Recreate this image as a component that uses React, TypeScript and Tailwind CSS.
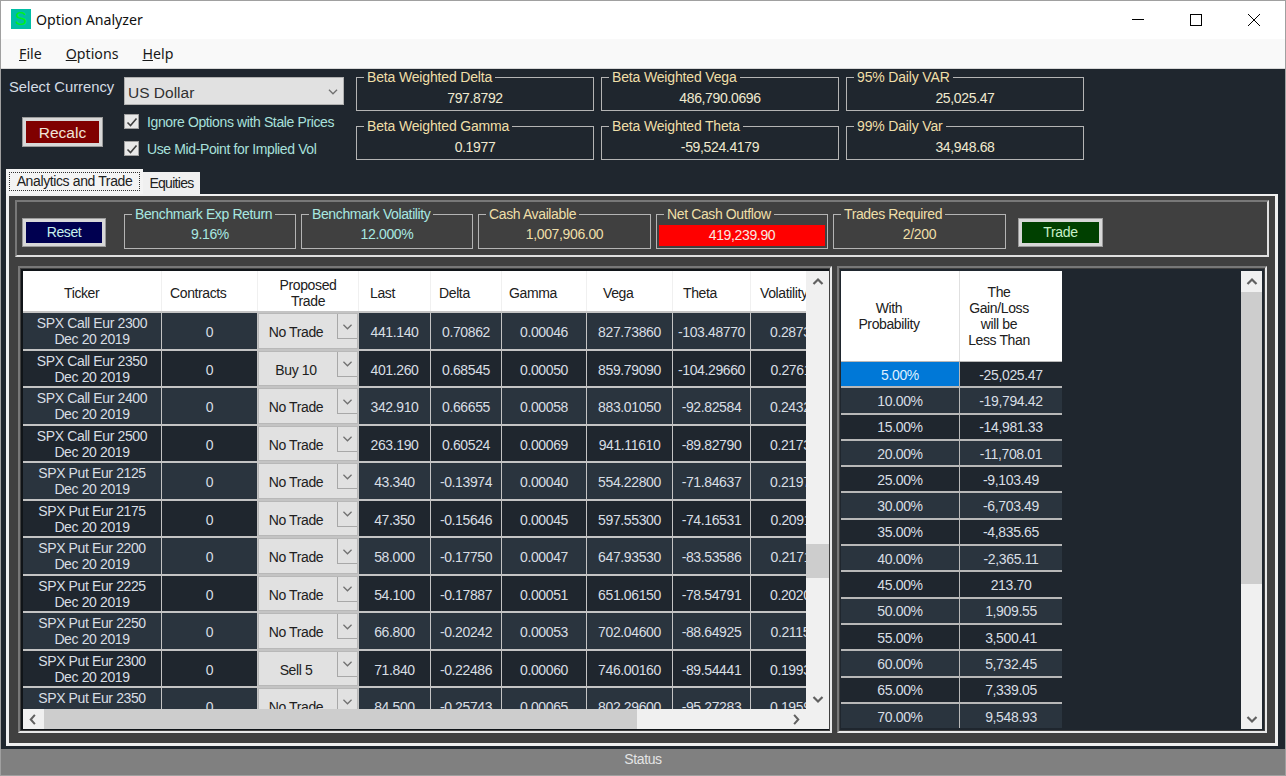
import React from "react";

const FONT = { fontFamily: '"Liberation Sans", Arial, sans-serif' };
const UI = { fontFamily: '"Noto Sans", "Open Sans", sans-serif' };

type Row = { t: string; trade: string; v: string[] };
const rows: Row[] = [
  { t: "SPX Call Eur 2300", trade: "No Trade", v: ["441.140", "0.70862", "0.00046", "827.73860", "-103.48770", "0.28731"] },
  { t: "SPX Call Eur 2350", trade: "Buy 10", v: ["401.260", "0.68545", "0.00050", "859.79090", "-104.29660", "0.27611"] },
  { t: "SPX Call Eur 2400", trade: "No Trade", v: ["342.910", "0.66655", "0.00058", "883.01050", "-92.82584", "0.24321"] },
  { t: "SPX Call Eur 2500", trade: "No Trade", v: ["263.190", "0.60524", "0.00069", "941.11610", "-89.82790", "0.21731"] },
  { t: "SPX Put Eur 2125", trade: "No Trade", v: ["43.340", "-0.13974", "0.00040", "554.22800", "-71.84637", "0.21971"] },
  { t: "SPX Put Eur 2175", trade: "No Trade", v: ["47.350", "-0.15646", "0.00045", "597.55300", "-74.16531", "0.20911"] },
  { t: "SPX Put Eur 2200", trade: "No Trade", v: ["58.000", "-0.17750", "0.00047", "647.93530", "-83.53586", "0.21711"] },
  { t: "SPX Put Eur 2225", trade: "No Trade", v: ["54.100", "-0.17887", "0.00051", "651.06150", "-78.54791", "0.20201"] },
  { t: "SPX Put Eur 2250", trade: "No Trade", v: ["66.800", "-0.20242", "0.00053", "702.04600", "-88.64925", "0.21151"] },
  { t: "SPX Put Eur 2300", trade: "Sell 5", v: ["71.840", "-0.22486", "0.00060", "746.00160", "-89.54441", "0.19931"] },
  { t: "SPX Put Eur 2350", trade: "No Trade", v: ["84.500", "-0.25743", "0.00065", "802.29600", "-95.27283", "0.19591"] },
];

const probs: [string, string][] = [
  ["5.00%", "-25,025.47"], ["10.00%", "-19,794.42"], ["15.00%", "-14,981.33"], ["20.00%", "-11,708.01"],
  ["25.00%", "-9,103.49"], ["30.00%", "-6,703.49"], ["35.00%", "-4,835.65"], ["40.00%", "-2,365.11"],
  ["45.00%", "213.70"], ["50.00%", "1,909.55"], ["55.00%", "3,500.41"], ["60.00%", "5,732.45"],
  ["65.00%", "7,339.05"], ["70.00%", "9,548.93"],
];

const valueWidths = ["w-[71px]", "w-[70px]", "w-[84px]", "w-[85px]", "w-[77px]", "w-[86px]"];

function Chevron({ dir, className = "", thin = false }: { dir: "up" | "down" | "left" | "right"; className?: string; thin?: boolean }) {
  const d = {
    up: "M1.5 7 L6 2.5 L10.5 7",
    down: "M1.5 3 L6 7.5 L10.5 3",
    left: "M7.5 1 L3 6 L7.5 11",
    right: "M4.5 1 L9 6 L4.5 11",
  }[dir];
  const box = dir === "up" || dir === "down" ? "0 0 12 10" : "0 0 12 12";
  return (
    <svg viewBox={box} className={className} fill="none" stroke={thin ? "#707070" : "#606060"} strokeWidth={thin ? 1.4 : 2.2}>
      <path d={d} />
    </svg>
  );
}

function Group({ label, value, labelCls, valueCls, className, children }: {
  label: string; value?: string; labelCls: string; valueCls: string; className: string; children?: React.ReactNode;
}) {
  return (
    <fieldset className={`border border-[#b4b4b4] min-w-0 shrink-0 ${className}`}>
      <legend className={`ml-[7px] px-[3px] leading-[16px] whitespace-nowrap ${labelCls}`}>{label}</legend>
      {children ?? <div className={`text-center text-[14px] tracking-[-0.35px] leading-[16px] ${valueCls}`}>{value}</div>}
    </fieldset>
  );
}

function Check({ label }: { label: string }) {
  return (
    <div className="flex items-center h-[15px] gap-[8px]">
      <div className="w-[15px] h-[15px] bg-[#e8e8e8] border border-[#a0a0a0] flex items-center justify-center">
        <svg viewBox="0 0 12 12" className="w-[12px] h-[12px]" fill="none" stroke="#404040" strokeWidth="1.6">
          <path d="M1.5 6.5 L4.5 9.5 L10.5 2.5" />
        </svg>
      </div>
      <span className="text-[14px] tracking-[-0.38px] leading-[16px] text-[#a8e0dc] whitespace-nowrap">{label}</span>
    </div>
  );
}

function OwnerButton({ label, className }: { label: string; className: string }) {
  return (
    <div className={`shrink-0 border-[3px] border-[#d8d8d8] outline outline-1 outline-[#9a9a9a] flex items-center justify-center ${className}`}>
      {label}
    </div>
  );
}

function TradeGrid() {
  return (
    <div className="w-[783px] h-[438px] overflow-hidden flex flex-col gap-[2px] bg-[#c4c4c4]">
      <div className="flex gap-[1px] h-[40px] shrink-0 bg-[#f0f0f0] text-[14px] tracking-[-0.38px] text-[#202020] leading-[16px] [&>div]:shrink-0 [&>div]:pt-[3px]">
        <div className="w-[138px] bg-white flex items-center pl-[41px]">Ticker</div>
        <div className="w-[95px] bg-white flex items-center pl-[8px]">Contracts</div>
        <div className="w-[100px] bg-white flex items-center justify-center text-center">Proposed<br />Trade</div>
        <div className="w-[71px] bg-white flex items-center pl-[11px]">Last</div>
        <div className="w-[70px] bg-white flex items-center pl-[8px]">Delta</div>
        <div className="w-[84px] bg-white flex items-center pl-[7px]">Gamma</div>
        <div className="w-[85px] bg-white flex items-center pl-[16px]">Vega</div>
        <div className="w-[77px] bg-white flex items-center pl-[10px]">Theta</div>
        <div className="w-[86px] bg-white flex items-center pl-[9px]">Volatility</div>
      </div>
      {rows.map((r, i) => {
        const bg = i % 2 === 0 ? "bg-[#2a343e]" : "bg-[#1f262e]";
        return (
          <div key={r.t} className="flex gap-[1px] h-[35.5px] shrink-0 text-[14px] tracking-[-0.38px] leading-[16px] text-[#d8dee4]">
            <div className={`w-[138px] shrink-0 pt-[1px] ${bg} flex flex-col items-center justify-center text-center`}>
              <span>{r.t}</span>
              <span>Dec 20 2019</span>
            </div>
            <div className={`w-[95px] shrink-0 pt-[3px] ${bg} flex items-center justify-center`}>0</div>
            <div className="w-[100px] shrink-0 bg-[#e1e1e1] border border-[#b8b8b8] flex text-[#202020]">
              <div className="flex-1 flex items-center justify-center pr-[4px] pt-[3px]">{r.trade}</div>
              <div className="w-[20px] h-[25px] border-l border-b border-[#a8a8a8] flex items-center justify-center">
                <Chevron dir="down" thin className="w-[11px] h-[9px]" />
              </div>
            </div>
            {r.v.map((v, j) => (
              <div key={j} className={`${valueWidths[j]} shrink-0 pt-[3px] ${bg} flex items-center justify-center`}>{v}</div>
            ))}
          </div>
        );
      })}
    </div>
  );
}

function VScroll({ thumbCls, spacerCls }: { thumbCls: string; spacerCls: string }) {
  return (
    <div className="flex-1 bg-[#f0f0f0] flex flex-col items-center">
      <div className="h-[21px] w-full flex items-center justify-center shrink-0">
        <Chevron dir="up" className="w-[12px] h-[10px]" />
      </div>
      <div className={`shrink-0 ${spacerCls}`} />
      <div className={`w-full bg-[#cdcdcd] shrink-0 ${thumbCls}`} />
      <div className="flex-1" />
      <div className="h-[20px] w-full flex items-center justify-center shrink-0">
        <Chevron dir="down" className="w-[12px] h-[10px]" />
      </div>
    </div>
  );
}

export default function App() {
  return (
    <div style={FONT} className="w-[1286px] h-[776px] border-x border-t border-[#a0a0a0] bg-[#1f262e] flex flex-col overflow-hidden">
      {/* title bar */}
      <div className="h-[38px] shrink-0 bg-white flex items-center">
        <div className="ml-[10px] mb-[2px] w-[20px] h-[20px] bg-[#00bfa5] flex items-center justify-center text-[#00f020] text-[18px] leading-none">S</div>
        <span className="ml-[5px] mb-[1px] text-[14.2px] text-[#101010]" style={UI}>Option Analyzer</span>
        <div className="ml-auto mr-[2px] flex items-center h-full">
          <div className="w-[58px] h-full flex items-center justify-center">
            <svg viewBox="0 0 12 12" className="w-[12px] h-[12px]" stroke="#000" fill="none"><path d="M0 5.5H12" /></svg>
          </div>
          <div className="w-[58px] h-full flex items-center justify-center">
            <svg viewBox="0 0 12 12" className="w-[12px] h-[12px]" stroke="#000" fill="none"><rect x="0.5" y="0.5" width="11" height="11" /></svg>
          </div>
          <div className="w-[58px] h-full flex items-center justify-center">
            <svg viewBox="0 0 12 12" className="w-[12px] h-[12px]" stroke="#000" fill="none"><path d="M0 0L12 12M12 0L0 12" /></svg>
          </div>
        </div>
      </div>
      {/* menu */}
      <div className="h-[30px] shrink-0 bg-[#f9f9f9] border-b border-[#d8d8d8] flex items-center pl-[18px] gap-[24px] text-[14.2px] text-[#181818]" style={UI}>
        <span><u>F</u>ile</span>
        <span><u>O</u>ptions</span>
        <span><u>H</u>elp</span>
      </div>

      {/* top controls */}
      <div className="h-[100px] shrink-0 flex">
        <div className="w-[355px] shrink-0 pl-[8px]">
          <div className="flex pt-[8px]">
            <span className="w-[115px] text-[14.8px] leading-[20px] text-[#d4dce4] whitespace-nowrap">Select Currency</span>
            <div className="w-[220px] h-[28px] bg-[#e1e1e1] border border-[#b0b0b0] flex items-center pl-[3px] pt-[3px] text-[15.5px] text-[#303030]">
              US Dollar
              <Chevron dir="down" thin className="ml-auto mr-[4px] mb-[3px] w-[12px] h-[9px]" />
            </div>
          </div>
          <div className="flex pt-[8px]">
            <div className="w-[115px] pl-[14px] pt-[5px]">
              <OwnerButton label="Recalc" className="w-[79px] h-[28px] pt-[2px] bg-[#800000] text-[#f0e4d8] text-[15.5px]" />
            </div>
            <div className="flex flex-col gap-[12px] mt-[1px]">
              <Check label="Ignore Options with Stale Prices" />
              <Check label="Use Mid-Point for Implied Vol" />
            </div>
          </div>
        </div>
        <div className="grid grid-cols-[238px_238px_238px] gap-x-[7px] gap-y-[7px] content-start">
          {[
            ["Beta Weighted Delta", "797.8792"], ["Beta Weighted Vega", "486,790.0696"], ["95% Daily VAR", "25,025.47"],
            ["Beta Weighted Gamma", "0.1977"], ["Beta Weighted Theta", "-59,524.4179"], ["99% Daily Var", "34,948.68"],
          ].map(([l, v]) => (
            <Group key={l} label={l} value={v} labelCls="text-[14px] tracking-[-0.16px] text-[#efdfa8]" valueCls="text-[#f0ead0] pt-[5px]" className="h-[42px]" />
          ))}
        </div>
      </div>

      {/* tabs */}
      <div className="h-[25px] shrink-0 flex items-end pl-[5px] text-[14px] tracking-[-0.38px] text-[#202020]">
        <div className="w-[137px] h-[25px] bg-[#f4f4f4] flex items-center justify-center">
          <span className="border border-dotted border-[#303030] h-[19px] leading-[17px] w-[131px] text-center whitespace-nowrap">Analytics and Trade</span>
        </div>
        <div className="w-[57px] h-[22px] bg-[#f0f0f0] flex items-center justify-center text-[14px] tracking-[-0.7px] pt-[1px]">Equities</div>
      </div>

      {/* tab panel */}
      <div className="ml-[5px] w-[1272px] h-[552px] shrink-0 border-[3px] border-t-2 border-[#f0f0f0] bg-[#404040] px-[2px]">
        <div className="h-full border-[2px] border-[#404040] flex flex-col">
          <div className="h-[57px] shrink-0 mx-[2px] mt-[2px] border-2 border-t-[#787878] border-l-[#787878] border-r-[#e0e0e0] border-b-[#e0e0e0] bg-[#404040] flex items-start pl-[6px]">
            <OwnerButton label="Reset" className="mt-[17px] w-[82px] h-[27px] bg-[#000050] text-[#c8f0ec] text-[14px] tracking-[-0.4px]" />
            <div className="ml-[19px] flex gap-[5px] pt-[4px]">
              <Group label="Benchmark Exp Return" value="9.16%" labelCls="text-[14px] tracking-[-0.38px] text-[#a8e8e0]" valueCls="text-[#a8e8e0] pt-[4px]" className="h-[43px] w-[172px]" />
              <Group label="Benchmark Volatility" value="12.000%" labelCls="text-[14px] tracking-[-0.38px] text-[#a8e8e0]" valueCls="text-[#a8e8e0] pt-[4px]" className="h-[43px] w-[172px]" />
              <Group label="Cash Available" value="1,007,906.00" labelCls="text-[14px] tracking-[-0.38px] text-[#efdfa8]" valueCls="text-[#efdfa8] pt-[4px]" className="h-[43px] w-[173px]" />
              <Group label="Net Cash Outflow" labelCls="text-[14px] tracking-[-0.38px] text-[#efdfa8]" valueCls="" className="h-[43px] w-[172px]">
                <div className="mx-[2px] mt-[3px] h-[21px] bg-[#ff0000] text-[#f8e8e0] text-[14px] tracking-[-0.35px] leading-[21px] text-center">419,239.90</div>
              </Group>
              <Group label="Trades Required" value="2/200" labelCls="text-[14px] tracking-[-0.38px] text-[#efdfa8]" valueCls="text-[#efdfa8] pt-[4px]" className="h-[43px] w-[173px]" />
            </div>
            <OwnerButton label="Trade" className="mt-[17px] ml-[13px] w-[83px] h-[27px] bg-[#004000] text-[#c8f0c8] text-[14px] tracking-[-0.3px]" />
          </div>

          <div className="mt-[9px] flex-1 min-h-0 flex gap-[5px] pl-[5px] pr-[4px] pb-[8px]">
            {/* left grid */}
            <div className="w-[814px] shrink-0 border-2 border-t-[#787878] border-l-[#787878] border-r-[#e8e8e8] border-b-[#e8e8e8] p-[1px]">
              <div className="h-full bg-[#101418] pt-[2px] pl-[2px] pb-[1px]">
                <div className="h-full flex flex-col bg-[#f0f0f0]">
                  <div className="h-[438px] flex shrink-0">
                    <TradeGrid />
                    <VScroll thumbCls="h-[34px]" spacerCls="h-[252px]" />
                  </div>
                  <div className="flex-1 flex items-stretch">
                    <div className="w-[21px] flex items-center justify-center shrink-0">
                      <Chevron dir="left" className="w-[11px] h-[11px]" />
                    </div>
                    <div className="w-[593px] bg-[#cdcdcd] shrink-0" />
                    <div className="flex-1" />
                    <div className="w-[47px] flex items-center justify-start shrink-0 pl-[8px]">
                      <Chevron dir="right" className="w-[11px] h-[11px]" />
                    </div>
                  </div>
                </div>
              </div>
            </div>

            {/* right grid */}
            <div className="flex-1 border-2 border-t-[#787878] border-l-[#787878] border-r-[#e8e8e8] border-b-[#e8e8e8] p-[1px]">
              <div className="h-full bg-[#1f262e] flex pl-[1px] pt-[2px] pr-[2px] pb-[1px]">
                <div className="w-[400px] shrink-0 overflow-hidden">
                  <div className="w-[221px] flex gap-[1px] h-[90px] bg-[#e0e0e0] text-[14px] tracking-[-0.38px] leading-[16px] text-[#202020] text-center">
                    <div className="w-[118px] bg-white flex items-center justify-center pr-[22px]">With<br />Probability</div>
                    <div className="w-[102px] bg-white flex items-center justify-center pr-[24px]">The<br />Gain/Loss<br />will be<br />Less Than</div>
                  </div>
                  <div className="w-[221px] bg-[#b8b8b8] flex flex-col gap-[2px] pt-[1px]">
                    {probs.map(([a, b], i) => {
                      const bg = i % 2 === 0 ? "bg-[#1f262e]" : "bg-[#2a343e]";
                      return (
                        <div key={a} className="flex gap-[1px] h-[24.3px] text-[14px] tracking-[-0.35px] text-[#d8dee4]">
                          <div className={`w-[118px] pt-[2px] flex items-center justify-center ${i === 0 ? "bg-[#0078d7] text-[#dff0ff]" : bg}`}>{a}</div>
                          <div className={`w-[102px] pt-[2px] flex items-center justify-center ${bg}`}>{b}</div>
                        </div>
                      );
                    })}
                  </div>
                </div>
                <VScroll thumbCls="h-[292px]" spacerCls="h-[0px]" />
              </div>
            </div>
          </div>
        </div>
      </div>

      <div className="flex-1" />
      {/* status */}
      <div className="h-[27px] shrink-0 bg-[#808080] border-b border-[#a0a0a0] flex items-center justify-center pb-[5px] text-[14px] tracking-[-0.4px] text-[#e4e4e4]">Status</div>
    </div>
  );
}
